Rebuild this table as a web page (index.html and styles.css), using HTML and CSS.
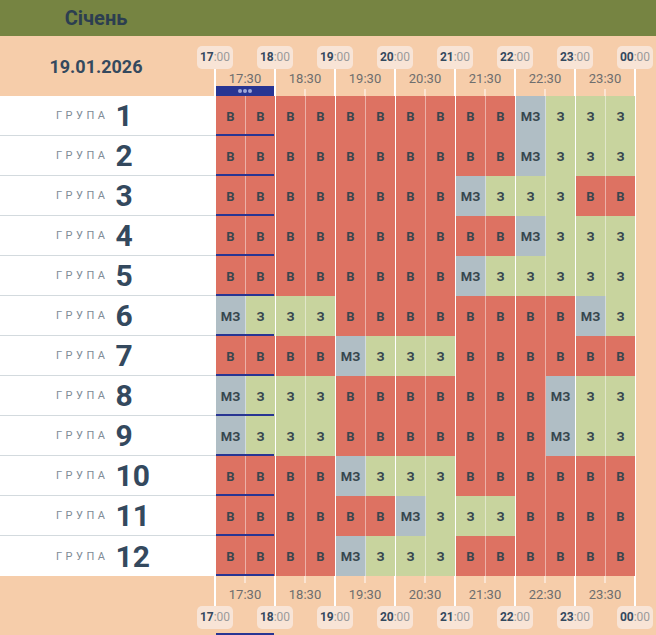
FILE: index.html
```html
<!DOCTYPE html>
<html lang="uk">
<head>
<meta charset="utf-8">
<title>Січень</title>
<link rel="stylesheet" href="styles.css">
</head>
<body>
<header class="month"><div class="month-title">Січень</div></header>

<section class="top">
  <div class="date">19.01.2026</div>
  <div class="scale">
    <div class="pills">
      <div class="pill-slot"><div class="pill"><b>17</b><span>:00</span></div></div>
      <div class="pill-slot"><div class="pill"><b>18</b><span>:00</span></div></div>
      <div class="pill-slot"><div class="pill"><b>19</b><span>:00</span></div></div>
      <div class="pill-slot"><div class="pill"><b>20</b><span>:00</span></div></div>
      <div class="pill-slot"><div class="pill"><b>21</b><span>:00</span></div></div>
      <div class="pill-slot"><div class="pill"><b>22</b><span>:00</span></div></div>
      <div class="pill-slot"><div class="pill"><b>23</b><span>:00</span></div></div>
      <div class="pill-slot"><div class="pill"><b>00</b><span>:00</span></div></div>
    </div>
    <div class="ticks ticks-top">
      <div class="hour"><div class="half">17:30</div><div class="zone"><div class="nowbar"><i class="dot"></i><i class="dot"></i><i class="dot"></i></div></div></div>
      <div class="hour"><div class="half">18:30</div><div class="zone"><div class="tick"></div></div></div>
      <div class="hour"><div class="half">19:30</div><div class="zone"><div class="tick"></div></div></div>
      <div class="hour"><div class="half">20:30</div><div class="zone"><div class="tick"></div></div></div>
      <div class="hour"><div class="half">21:30</div><div class="zone"><div class="tick"></div></div></div>
      <div class="hour"><div class="half">22:30</div><div class="zone"><div class="tick"></div></div></div>
      <div class="hour"><div class="half">23:30</div><div class="zone"><div class="tick"></div></div></div>
      <div class="hour end"></div>
    </div>
  </div>
</section>

<section class="rows">
  <div class="row">
    <div class="label"><span class="g-word">ГРУПА</span><span class="g-num">1</span></div>
    <div class="hr now"><div class="c V">В</div><div class="c V">В</div></div>
    <div class="hr"><div class="c V">В</div><div class="c V">В</div></div>
    <div class="hr"><div class="c V">В</div><div class="c V">В</div></div>
    <div class="hr"><div class="c V">В</div><div class="c V">В</div></div>
    <div class="hr"><div class="c V">В</div><div class="c V">В</div></div>
    <div class="hr"><div class="c M">МЗ</div><div class="c Z">З</div></div>
    <div class="hr"><div class="c Z">З</div><div class="c Z">З</div></div>
  </div>
  <div class="row">
    <div class="label"><span class="g-word">ГРУПА</span><span class="g-num">2</span></div>
    <div class="hr now"><div class="c V">В</div><div class="c V">В</div></div>
    <div class="hr"><div class="c V">В</div><div class="c V">В</div></div>
    <div class="hr"><div class="c V">В</div><div class="c V">В</div></div>
    <div class="hr"><div class="c V">В</div><div class="c V">В</div></div>
    <div class="hr"><div class="c V">В</div><div class="c V">В</div></div>
    <div class="hr"><div class="c M">МЗ</div><div class="c Z">З</div></div>
    <div class="hr"><div class="c Z">З</div><div class="c Z">З</div></div>
  </div>
  <div class="row">
    <div class="label"><span class="g-word">ГРУПА</span><span class="g-num">3</span></div>
    <div class="hr now"><div class="c V">В</div><div class="c V">В</div></div>
    <div class="hr"><div class="c V">В</div><div class="c V">В</div></div>
    <div class="hr"><div class="c V">В</div><div class="c V">В</div></div>
    <div class="hr"><div class="c V">В</div><div class="c V">В</div></div>
    <div class="hr"><div class="c M">МЗ</div><div class="c Z">З</div></div>
    <div class="hr"><div class="c Z">З</div><div class="c Z">З</div></div>
    <div class="hr"><div class="c V">В</div><div class="c V">В</div></div>
  </div>
  <div class="row">
    <div class="label"><span class="g-word">ГРУПА</span><span class="g-num">4</span></div>
    <div class="hr now"><div class="c V">В</div><div class="c V">В</div></div>
    <div class="hr"><div class="c V">В</div><div class="c V">В</div></div>
    <div class="hr"><div class="c V">В</div><div class="c V">В</div></div>
    <div class="hr"><div class="c V">В</div><div class="c V">В</div></div>
    <div class="hr"><div class="c V">В</div><div class="c V">В</div></div>
    <div class="hr"><div class="c M">МЗ</div><div class="c Z">З</div></div>
    <div class="hr"><div class="c Z">З</div><div class="c Z">З</div></div>
  </div>
  <div class="row">
    <div class="label"><span class="g-word">ГРУПА</span><span class="g-num">5</span></div>
    <div class="hr now"><div class="c V">В</div><div class="c V">В</div></div>
    <div class="hr"><div class="c V">В</div><div class="c V">В</div></div>
    <div class="hr"><div class="c V">В</div><div class="c V">В</div></div>
    <div class="hr"><div class="c V">В</div><div class="c V">В</div></div>
    <div class="hr"><div class="c M">МЗ</div><div class="c Z">З</div></div>
    <div class="hr"><div class="c Z">З</div><div class="c Z">З</div></div>
    <div class="hr"><div class="c Z">З</div><div class="c Z">З</div></div>
  </div>
  <div class="row">
    <div class="label"><span class="g-word">ГРУПА</span><span class="g-num">6</span></div>
    <div class="hr now"><div class="c M">МЗ</div><div class="c Z">З</div></div>
    <div class="hr"><div class="c Z">З</div><div class="c Z">З</div></div>
    <div class="hr"><div class="c V">В</div><div class="c V">В</div></div>
    <div class="hr"><div class="c V">В</div><div class="c V">В</div></div>
    <div class="hr"><div class="c V">В</div><div class="c V">В</div></div>
    <div class="hr"><div class="c V">В</div><div class="c V">В</div></div>
    <div class="hr"><div class="c M">МЗ</div><div class="c Z">З</div></div>
  </div>
  <div class="row">
    <div class="label"><span class="g-word">ГРУПА</span><span class="g-num">7</span></div>
    <div class="hr now"><div class="c V">В</div><div class="c V">В</div></div>
    <div class="hr"><div class="c V">В</div><div class="c V">В</div></div>
    <div class="hr"><div class="c M">МЗ</div><div class="c Z">З</div></div>
    <div class="hr"><div class="c Z">З</div><div class="c Z">З</div></div>
    <div class="hr"><div class="c V">В</div><div class="c V">В</div></div>
    <div class="hr"><div class="c V">В</div><div class="c V">В</div></div>
    <div class="hr"><div class="c V">В</div><div class="c V">В</div></div>
  </div>
  <div class="row">
    <div class="label"><span class="g-word">ГРУПА</span><span class="g-num">8</span></div>
    <div class="hr now"><div class="c M">МЗ</div><div class="c Z">З</div></div>
    <div class="hr"><div class="c Z">З</div><div class="c Z">З</div></div>
    <div class="hr"><div class="c V">В</div><div class="c V">В</div></div>
    <div class="hr"><div class="c V">В</div><div class="c V">В</div></div>
    <div class="hr"><div class="c V">В</div><div class="c V">В</div></div>
    <div class="hr"><div class="c V">В</div><div class="c M">МЗ</div></div>
    <div class="hr"><div class="c Z">З</div><div class="c Z">З</div></div>
  </div>
  <div class="row">
    <div class="label"><span class="g-word">ГРУПА</span><span class="g-num">9</span></div>
    <div class="hr now"><div class="c M">МЗ</div><div class="c Z">З</div></div>
    <div class="hr"><div class="c Z">З</div><div class="c Z">З</div></div>
    <div class="hr"><div class="c V">В</div><div class="c V">В</div></div>
    <div class="hr"><div class="c V">В</div><div class="c V">В</div></div>
    <div class="hr"><div class="c V">В</div><div class="c V">В</div></div>
    <div class="hr"><div class="c V">В</div><div class="c M">МЗ</div></div>
    <div class="hr"><div class="c Z">З</div><div class="c Z">З</div></div>
  </div>
  <div class="row">
    <div class="label"><span class="g-word">ГРУПА</span><span class="g-num">10</span></div>
    <div class="hr now"><div class="c V">В</div><div class="c V">В</div></div>
    <div class="hr"><div class="c V">В</div><div class="c V">В</div></div>
    <div class="hr"><div class="c M">МЗ</div><div class="c Z">З</div></div>
    <div class="hr"><div class="c Z">З</div><div class="c Z">З</div></div>
    <div class="hr"><div class="c V">В</div><div class="c V">В</div></div>
    <div class="hr"><div class="c V">В</div><div class="c V">В</div></div>
    <div class="hr"><div class="c V">В</div><div class="c V">В</div></div>
  </div>
  <div class="row">
    <div class="label"><span class="g-word">ГРУПА</span><span class="g-num">11</span></div>
    <div class="hr now"><div class="c V">В</div><div class="c V">В</div></div>
    <div class="hr"><div class="c V">В</div><div class="c V">В</div></div>
    <div class="hr"><div class="c V">В</div><div class="c V">В</div></div>
    <div class="hr"><div class="c M">МЗ</div><div class="c Z">З</div></div>
    <div class="hr"><div class="c Z">З</div><div class="c Z">З</div></div>
    <div class="hr"><div class="c V">В</div><div class="c V">В</div></div>
    <div class="hr"><div class="c V">В</div><div class="c V">В</div></div>
  </div>
  <div class="row">
    <div class="label"><span class="g-word">ГРУПА</span><span class="g-num">12</span></div>
    <div class="hr now"><div class="c V">В</div><div class="c V">В</div></div>
    <div class="hr"><div class="c V">В</div><div class="c V">В</div></div>
    <div class="hr"><div class="c M">МЗ</div><div class="c Z">З</div></div>
    <div class="hr"><div class="c Z">З</div><div class="c Z">З</div></div>
    <div class="hr"><div class="c V">В</div><div class="c V">В</div></div>
    <div class="hr"><div class="c V">В</div><div class="c V">В</div></div>
    <div class="hr"><div class="c V">В</div><div class="c V">В</div></div>
  </div>
</section>

<section class="bottom">
  <div class="date-space"></div>
  <div class="scale">
    <div class="ticks ticks-bottom">
      <div class="hour"><div class="zone"><div class="tick"></div></div><div class="half">17:30</div></div>
      <div class="hour"><div class="zone"><div class="tick"></div></div><div class="half">18:30</div></div>
      <div class="hour"><div class="zone"><div class="tick"></div></div><div class="half">19:30</div></div>
      <div class="hour"><div class="zone"><div class="tick"></div></div><div class="half">20:30</div></div>
      <div class="hour"><div class="zone"><div class="tick"></div></div><div class="half">21:30</div></div>
      <div class="hour"><div class="zone"><div class="tick"></div></div><div class="half">22:30</div></div>
      <div class="hour"><div class="zone"><div class="tick"></div></div><div class="half">23:30</div></div>
      <div class="hour end"></div>
    </div>
    <div class="pills">
      <div class="pill-slot"><div class="pill"><b>17</b><span>:00</span></div></div>
      <div class="pill-slot"><div class="pill"><b>18</b><span>:00</span></div></div>
      <div class="pill-slot"><div class="pill"><b>19</b><span>:00</span></div></div>
      <div class="pill-slot"><div class="pill"><b>20</b><span>:00</span></div></div>
      <div class="pill-slot"><div class="pill"><b>21</b><span>:00</span></div></div>
      <div class="pill-slot"><div class="pill"><b>22</b><span>:00</span></div></div>
      <div class="pill-slot"><div class="pill"><b>23</b><span>:00</span></div></div>
      <div class="pill-slot"><div class="pill"><b>00</b><span>:00</span></div></div>
    </div>
    <div class="nowbar-bottom"></div>
  </div>
</section>
</body>
</html>
```

FILE: styles.css
```css
* { box-sizing: border-box; }

html, body { margin: 0; padding: 0; }

body {
  overflow: hidden;
  width: 656px;
  background: #f6cdaa;
  font-family: Roboto, "Liberation Sans", sans-serif;
  color: #34495e;
}

.month {
  height: 36px;
  background: #768442;
  display: flex;
  align-items: center;
}

.month-title {
  width: 192px;
  text-align: center;
  font-size: 20px;
  font-weight: 700;
  color: #2c3e50;
}

.top {
  display: flex;
  height: 60px;
}

.date {
  width: 185px;
  flex: none;
  padding-left: 7px;
  display: flex;
  align-items: center;
  justify-content: center;
  font-size: 18px;
  font-weight: 700;
  color: #34495e;
}

.scale {
  display: flex;
  flex-direction: column;
}

.pills {
  display: flex;
  height: 23px;
}

.top .pills { margin-top: 10px; }

.pill-slot {
  width: 60px;
  flex: none;
  display: flex;
  justify-content: center;
}

.pill {
  height: 23px;
  padding: 0 3px;
  border-radius: 5px;
  background: #f8e4d6;
  font-size: 12px;
  line-height: 23px;
  white-space: nowrap;
}

.pill b { color: #34495e; font-weight: 700; }
.pill span { color: #9a9a9a; }

.ticks {
  display: flex;
  margin-left: 29px;
}

.ticks-top { height: 27px; }
.ticks-bottom { height: 30px; }

.hour {
  width: 60px;
  flex: none;
  border-left: 2px solid #fff;
  display: flex;
  flex-direction: column;
  align-items: center;
}

.ticks-top .hour { justify-content: flex-end; }

.hour.end { width: 2px; }

.half {
  font-size: 13px;
  line-height: 14px;
  color: #6e6e6e;
}

.ticks-bottom .half { margin-top: 5px; }

.zone {
  height: 10px;
  width: 100%;
  display: flex;
  justify-content: center;
  align-items: flex-end;
}

.ticks-bottom .zone { height: 7px; align-items: flex-start; }

.tick {
  width: 2px;
  height: 7px;
  background: #fbe4d2;
}

.nowbar {
  width: 100%;
  height: 10px;
  background: #283593;
  display: flex;
  align-items: center;
  justify-content: center;
  gap: 1px;
}

.dot {
  width: 4px;
  height: 4px;
  border-radius: 50%;
  background: #9fa8da;
}

.nowbar-bottom {
  margin-left: 31px;
  margin-top: 4px;
  width: 58px;
  height: 10px;
  background: #283593;
}

.row {
  display: flex;
  height: 40px;
}

.label {
  width: 216px;
  flex: none;
  background: #fff;
  border-bottom: 1px solid #d3dade;
  display: flex;
  align-items: center;
  padding-left: 56px;
}

.row:last-child .label { border-bottom: 0; }

.g-word {
  font-size: 11px;
  letter-spacing: 3.5px;
  color: #808b96;
}

.g-num {
  margin-left: 7px;
  font-size: 30px;
  font-weight: 700;
  color: #34495e;
}

.hr {
  display: flex;
  width: 60px;
  flex: none;
  position: relative;
}

.c {
  width: 30px;
  border-right: 1px solid rgba(255, 255, 255, 0.45);
  display: flex;
  align-items: center;
  justify-content: center;
  font-size: 13px;
  font-weight: 700;
  color: #37474f;
}

.c + .c { border-right-color: #fff; }

.V { background: #dd7262; }
.Z { background: #c8d49e; }
.M { background: #b0bec5; }

.hr.now::after {
  content: "";
  position: absolute;
  left: 0;
  bottom: 0;
  width: 58px;
  height: 2px;
  background: #283593;
}

.bottom { display: flex; }

.date-space { width: 185px; flex: none; }
```
